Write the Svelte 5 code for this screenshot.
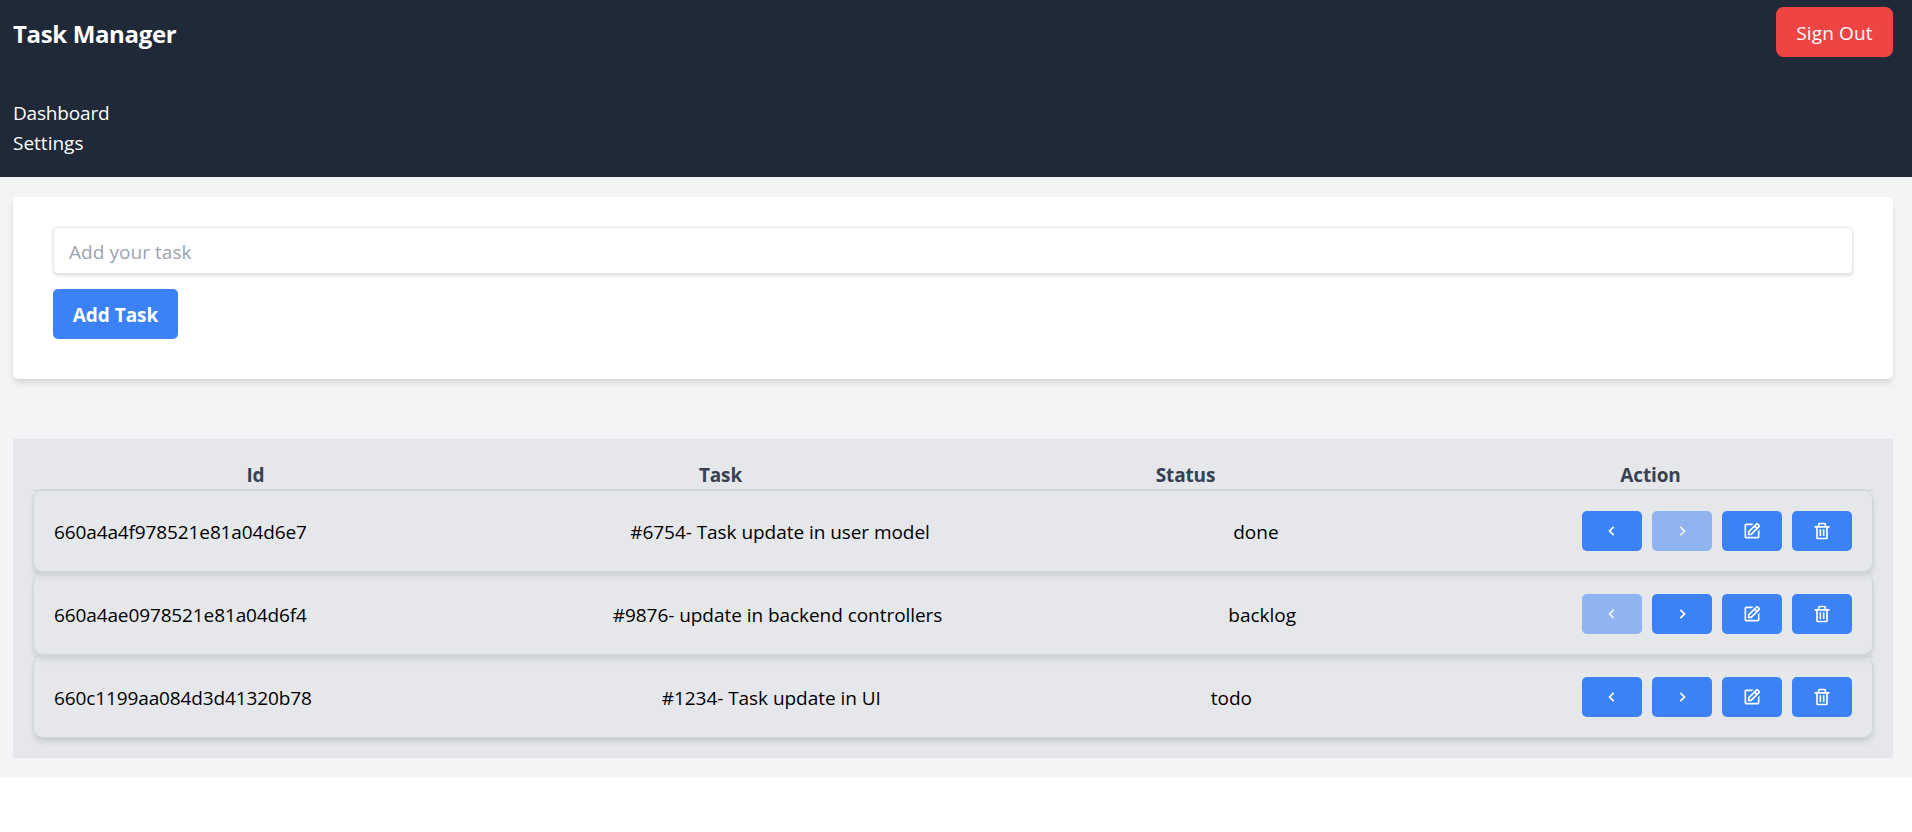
<script>
  const headings = ['Id', 'Task', 'Status', 'Action'];
  const tasks = [
    { id: '660a4a4f978521e81a04d6e7', title: '#6754- Task update in user model', status: 'done', first: false, last: true },
    { id: '660a4ae0978521e81a04d6f4', title: '#9876- update in backend controllers', status: 'backlog', first: true, last: false },
    { id: '660c1199aa084d3d41320b78', title: '#1234- Task update in UI', status: 'todo', first: false, last: false }
  ];
</script>

<header>
  <div class="bar">
    <h1>Task Manager</h1>
    <button class="signout">Sign Out</button>
  </div>
  <nav>
    <a class="dashboard" href="#dashboard">Dashboard</a>
    <a href="#settings">Settings</a>
  </nav>
</header>

<main>
  <form>
    <input placeholder="Add your task" />
    <button type="button" class="add">Add Task</button>
  </form>

  <section>
    <div class="head">
      {#each headings as h}<div>{h}</div>{/each}
    </div>
    <ul>
      {#each tasks as t}
        <li>
          <div class="row">
            <span class="id">{t.id}</span>
            <span class="title">{t.title}</span>
            <span class="status">{t.status}</span>
            <div class="actions">
              <button disabled={t.first} aria-label="Previous">
                <svg viewBox="0 0 24 24"><path d="M13.293 6.293 7.586 12l5.707 5.707 1.414-1.414L10.414 12l4.293-4.293z" /></svg>
              </button>
              <button disabled={t.last} aria-label="Next">
                <svg viewBox="0 0 24 24"><path d="M10.707 17.707 16.414 12l-5.707-5.707-1.414 1.414L13.586 12l-4.293 4.293z" /></svg>
              </button>
              <button aria-label="Edit">
                <svg viewBox="0 0 24 24"><path d="m7 17.013 4.413-.015 9.632-9.54c.378-.378.586-.88.586-1.414s-.208-1.036-.586-1.414l-1.586-1.586c-.756-.756-2.075-.752-2.825-.003L7 12.583v4.43zM18.045 4.458l1.589 1.583-1.597 1.582-1.586-1.585 1.594-1.58zM9 13.417l6.03-5.973 1.586 1.586-6.029 5.971L9 15.006v-1.589z" /><path d="M5 21h14c1.103 0 2-.897 2-2v-8.668l-2 2V19H8.158c-.026 0-.053.01-.079.01-.033 0-.066-.009-.1-.01H5V5h6.847l2-2H5c-1.103 0-2 .897-2 2v14c0 1.103.897 2 2 2z" /></svg>
              </button>
              <button aria-label="Delete">
                <svg viewBox="0 0 24 24"><path d="M5 20a2 2 0 0 0 2 2h10a2 2 0 0 0 2-2V8h2V6h-4V4a2 2 0 0 0-2-2H9a2 2 0 0 0-2 2v2H3v2h2zM9 4h6v2H9zM8 8h9v12H7V8z" /><path d="M9 10h2v8H9zm4 0h2v8h-2z" /></svg>
              </button>
            </div>
          </div>
        </li>
      {/each}
    </ul>
  </section>
</main>

<style>
  :global(body) {
    margin: 0;
    background: #fff;
    font: 19px/30px 'Open Sans', 'Noto Sans', sans-serif;
    color: #000;
  }
  * { box-sizing: border-box; }
  button {
    border: 0;
    font: inherit;
    color: #fff;
    white-space: nowrap;
  }
  header {
    height: 177px;
    padding: 7px 19px 0 13px;
    background: #1f2937;
    color: #fff;
  }
  .bar { display: flex; justify-content: space-between; height: 50px; }
  h1 { margin: 9px 0 0; font-size: 24px; line-height: 35px; font-weight: 700; letter-spacing: -0.35px; }
  .signout { width: 117px; height: 50px; padding: 2px 0 0; border-radius: 7.5px; background: #ef4444; letter-spacing: 0.15px; }
  nav { display: flex; flex-direction: column; padding-top: 41px; }
  nav a { color: inherit; text-decoration: none; height: 30px; }
  .dashboard { letter-spacing: -0.18px; }
  main { height: 601px; padding: 20px 19px 0 13px; background: #f3f4f6; }
  form {
    height: 182px;
    padding: 30px 40px 0;
    background: #fff;
    border-radius: 5px;
    box-shadow: 0 5px 7.5px -1.25px rgb(0 0 0 / 0.1), 0 2.5px 5px -2.5px rgb(0 0 0 / 0.1);
  }
  input {
    display: block;
    width: 100%;
    height: 47px;
    padding: 2px 15px 0;
    border: 1px solid #e5e7eb;
    border-radius: 5px;
    font: inherit;
    box-shadow: 0 1.25px 3.75px rgb(0 0 0 / 0.1), 0 1.25px 2.5px -1.25px rgb(0 0 0 / 0.1);
  }
  input::placeholder { color: #9ca3af; opacity: 1; letter-spacing: 0.05px; }
  .add { display: block; width: 125px; height: 50px; margin-top: 15px; padding: 2px 0 0; border-radius: 5px; background: #3b82f6; font-weight: 700; letter-spacing: -0.05px; }
  section { height: 319px; margin-top: 60px; padding: 20px 20px 0; background: #e5e7eb; }
  .head { display: grid; grid-template-columns: repeat(4, 1fr); gap: 20px; height: 30px; line-height: 32px; text-align: center; font-weight: 700; letter-spacing: -0.15px; color: #374151; }
  ul { list-style: none; margin: 0; padding: 0; }
  li { background: linear-gradient(#d1d5db, #d1d5db) 0 1px / 100% 1px no-repeat; }
  .row {
    display: flex;
    align-items: center;
    justify-content: space-between;
    height: 83px;
    padding: 1px 20px 0;
    border: 1px solid #d1d5db;
    border-radius: 10px;
    box-shadow: 0 5px 7.5px -1.25px rgb(0 0 0 / 0.1), 0 2.5px 5px -2.5px rgb(0 0 0 / 0.1);
  }
  .row > span { padding-top: 2px; }
  .id { margin-right: 20px; letter-spacing: -0.12px; }
  .title { letter-spacing: -0.05px; }
  .actions { display: flex; gap: 10px; }
  .actions button { display: grid; place-items: center; width: 60px; height: 40px; padding: 0; border-radius: 5px; background: #3b82f6; }
  .actions button:disabled { opacity: 0.5; }
  svg { width: 20px; height: 20px; fill: currentColor; }
</style>
